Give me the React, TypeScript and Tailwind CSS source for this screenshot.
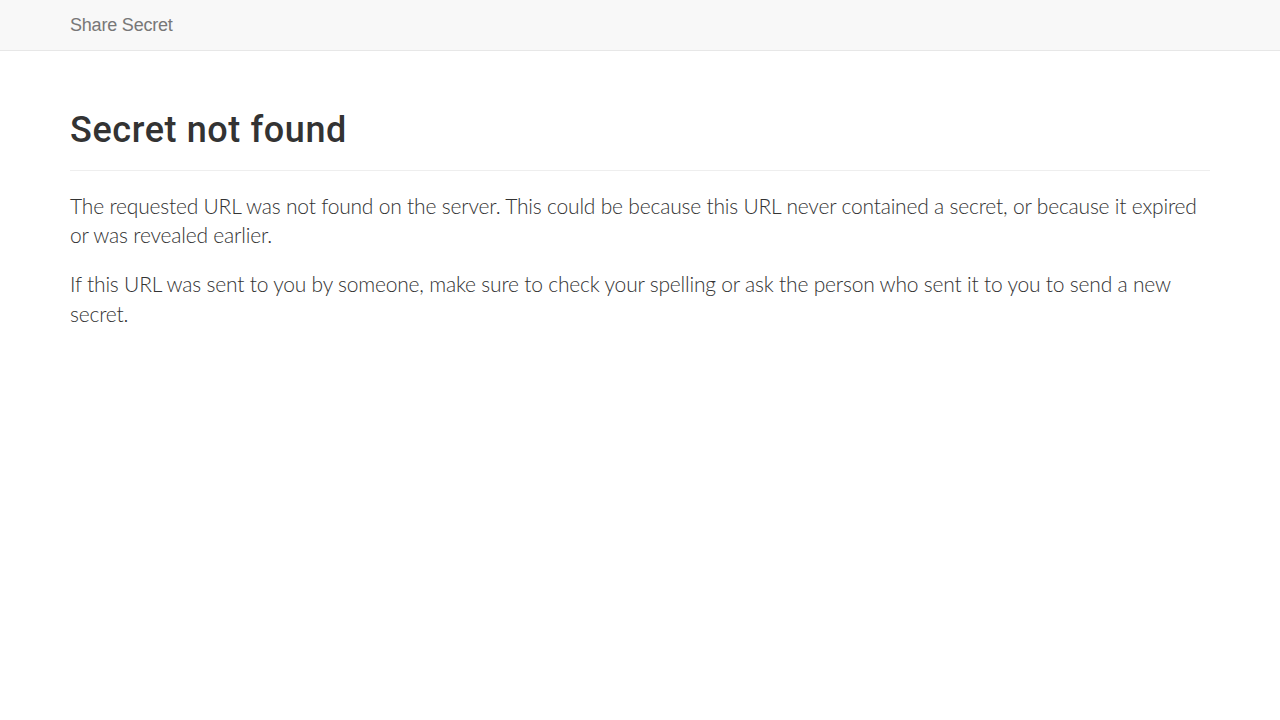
export default function App() {
  return (
    <div className="min-h-screen bg-white font-['Liberation_Sans',Arial,sans-serif] text-[14px] text-[#333]">
      <nav className="h-[51px] border-b border-[#e7e7e7] bg-[#f8f8f8]">
        <div className="mx-auto w-[1170px] px-[15px]">
          <a href="#" className="block py-[15px] text-[18px] leading-[20px] tracking-[-0.2px] text-[#777]">
            Share Secret
          </a>
        </div>
      </nav>

      <main className="mx-auto w-[1170px] px-[15px] pt-[60px]">
        <div className="mb-[20px] border-b border-[#eee] pb-[9px]">
          <h1 className="mb-[10px] font-['Roboto',sans-serif] text-[36px] font-medium leading-[39.6px] tracking-[0.6px] text-[#333]">
            Secret not found
          </h1>
        </div>
        <div className="font-['Lato',sans-serif] text-[21px] font-light leading-[29.4px] tracking-[-0.2px] text-[#333]">
          <p className="mb-[20px]">
            The requested URL was not found on the server. This could be because this URL never
            contained a secret, or because it expired or was revealed earlier.
          </p>
          <p className="mb-[20px]">
            If this URL was sent to you by someone, make sure to check your spelling or ask the
            person who sent it to you to send a new secret.
          </p>
        </div>
      </main>
    </div>
  );
}
